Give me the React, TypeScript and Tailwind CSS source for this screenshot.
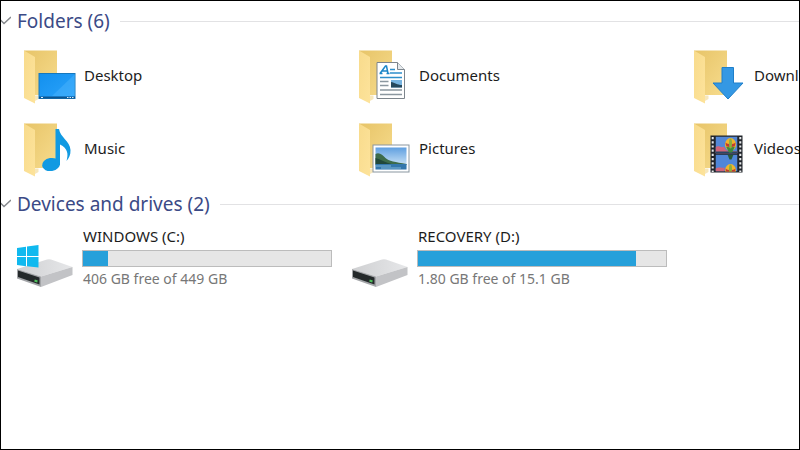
import { useState } from "react";
import type { ReactNode } from "react";

const folders = [
  { name: "Desktop", overlay: <DesktopOverlay /> },
  { name: "Documents", overlay: <DocumentOverlay /> },
  { name: "Downloads", overlay: <DownloadOverlay /> },
  { name: "Music", overlay: <MusicOverlay /> },
  { name: "Pictures", overlay: <PictureOverlay /> },
  { name: "Videos", overlay: <VideoOverlay /> },
];

const drives = [
  { name: "WINDOWS (C:)", info: "406 GB free of 449 GB", used: 10, system: true },
  { name: "RECOVERY (D:)", info: "1.80 GB free of 15.1 GB", used: 88, system: false },
];

function DesktopOverlay() {
  return (
    <g>
      <rect x="23" y="25.5" width="36" height="25" fill="url(#screen)" stroke="#1678bd" />
      <path d="M59 26v22H36z" fill="#5bbcff" opacity=".35" />
      <path d="M23 49.5h36" stroke="#0d5590" strokeWidth="2" />
      <path d="M25 49.5h2M51 49.5h1.5M53.5 49.5H55M56 49.5h1.5" stroke="#d8efff" />
    </g>
  );
}

function DocumentOverlay() {
  return (
    <g>
      <path d="M26 14.5h20.5l7 7V50.5H26z" fill="#fff" stroke="#7d858c" />
      <path d="M46.5 14.5v7h7" fill="#e6eaed" stroke="#7d858c" />
      <path d="M29 25.5L34.5 18h1l1.5 7.5M31.5 23h5M28.5 25.5h3M35.5 25.5h3" fill="none" stroke="#1c86c8" strokeWidth="1.5" />
      <path d="M39 21.5h5M39 25h12M29 29.5h22" stroke="#2f8fcb" strokeWidth="1.5" />
      <path d="M29 33.5h8.5M29 37.5h8.5M29 42h22M29 46.5h22" stroke="#8b979f" strokeWidth="1.3" />
      <rect x="40" y="32" width="11" height="7.5" fill="#78b4e0" />
      <path d="M40 34c4 .5 6 3 11 3v2.5H40z" fill="#26485c" />
    </g>
  );
}

function DownloadOverlay() {
  return <path d="M36 19.5h11.5V35H57L42 51 27 35h9z" fill="#3498e4" stroke="#1f7fca" />;
}

function MusicOverlay() {
  return (
    <g fill="#119ae2">
      <ellipse cx="35" cy="43.5" rx="9" ry="6.5" transform="rotate(-10 35 43.5)" />
      <path d="M39.5 8h3.5c1 8 11 12 11.5 21 .2 5-1.500 8-4 11 2-7 1.500-12.500-6.500-16.500V44h-4.500z" />
    </g>
  );
}

function PictureOverlay() {
  return (
    <g>
      <rect x="22" y="24" width="36" height="27" fill="#fff" stroke="#8996a0" />
      <rect x="24.5" y="26.5" width="31" height="22" fill="url(#sky)" />
      <path d="M24.5 33c4-2 7 1 10 4s10 4 21 6v1h-31z" fill="#3d6b4a" />
      <path d="M24.5 37c5 1 10 5 16 6h-16z" fill="#21483a" />
      <path d="M24.5 43h31v5.5h-31z" fill="#3477ac" />
      <path d="M25 45h15M30 47h20" stroke="#7eb6d6" />
    </g>
  );
}

function VideoOverlay() {
  return (
    <g>
      <rect x="24.5" y="14.5" width="32" height="37" fill="#20242a" />
      <path d="M26.700 16v35M54.300 16v35" stroke="#e7e9eb" strokeWidth="2" strokeDasharray="2.2 2" />
      {/* upper frame shows the whole balloon, lower one only its top */}
      <svg x="29.5" y="15.5" width="22" height="17" viewBox="0 0 22 17">
        <rect width="22" height="17" fill="#5488d6" />
        <path d="M0 11c3-3 6 1 8-1l3 4 11 1v2H0z" fill="#cf6579" />
        <path d="M0 15h22v2H0z" fill="#274765" />
        <Balloon />
      </svg>
      <svg x="29.5" y="33.5" width="22" height="17" viewBox="0 0 22 17">
        <rect width="22" height="17" fill="#4f86d8" />
        <path d="M12 0h6l-2 5h-2z" fill="#2c5a35" />
        <path d="M0 14c3-2 6 0 9-1v4H0z" fill="#cf6579" />
        <g transform="translate(0 8)">
          <Balloon />
        </g>
      </svg>
    </g>
  );
}

function Balloon() {
  return (
    <g>
      <ellipse cx="15" cy="8" rx="5.5" ry="6.500" fill="#f0b52b" />
      <path d="M10 6c2 2 8 2 10 0l-.5 3c-2 2-7 2-9 0z" fill="#c23a31" />
      <path d="M10.500 10c2 1 7 1 9 0L16.500 16h-3z" fill="#3f8a3d" />
      <ellipse cx="15" cy="7" rx="1.500" ry="5" fill="#8dae3d" />
    </g>
  );
}

function FolderIcon({ children }: { children: ReactNode }) {
  return (
    <svg className="h-14 w-[62px] shrink-0" viewBox="0 0 62 56" aria-hidden="true">
      <path d="M8 2.500h33V47H19z" fill="url(#folderBack)" />
      <path d="M8 2.500L19 9v46.500L8 50z" fill="url(#folderFront)" />
      <path d="M19 47.500h3.500V51L19 53z" fill="#f7e7bb" />
      {children}
    </svg>
  );
}

function DriveIcon({ system }: { system: boolean }) {
  return (
    <svg className="h-14 w-[62px] shrink-0" viewBox="0 0 62 56" aria-hidden="true">
      <path d="M1 38L31 28.500q2-.700 4 0L56.500 36 25 45.500z" fill="url(#driveTop)" />
      <path d="M25 45.500L56.500 36v8L25 56z" fill="#c2c3c6" />
      <path d="M1 38l24 7.500V56L1 47.500z" fill="#a3a5a8" />
      <path d="M2 39.500l21.500 7v7L2 46z" fill="#24292a" />
      <path d="M18.500 49.500l3 1" stroke="#4fc35d" strokeWidth="2" />
      {system && (
        <path
          d="M1 17l9-1.300v9.300H1zM11 15.500L22.500 14v11H11zM1 26h9v9.300L1 34zM11 26h11.500v10.500L11 35.300z"
          fill="#10b9ef"
        />
      )}
    </svg>
  );
}

// Gradients shared by all the icons on the page
function IconDefs() {
  return (
    <svg className="absolute h-0 w-0" aria-hidden="true">
      <defs>
        <linearGradient id="folderBack" x1="0" y1="0" x2="1" y2="1">
          <stop offset="0" stopColor="#e7c468" />
          <stop offset="1" stopColor="#f7dc8d" />
        </linearGradient>
        <linearGradient id="folderFront" x1="0" y1="0" x2="1" y2="1">
          <stop offset="0" stopColor="#f8db8c" />
          <stop offset="1" stopColor="#fde39b" />
        </linearGradient>
        <linearGradient id="screen" x1="0" y1="0" x2="1" y2="1">
          <stop offset="0" stopColor="#1390ee" />
          <stop offset="1" stopColor="#2ba3fb" />
        </linearGradient>
        <linearGradient id="sky" x1="0" y1="0" x2="0" y2="1">
          <stop offset="0" stopColor="#5f9fe0" />
          <stop offset="1" stopColor="#e3f2fb" />
        </linearGradient>
        <linearGradient id="driveTop" x1="0" y1="0" x2="1" y2="0">
          <stop offset="0" stopColor="#cfd0d2" />
          <stop offset="1" stopColor="#e6e7e9" />
        </linearGradient>
      </defs>
    </svg>
  );
}

function Section({ title, children }: { title: string; children: ReactNode }) {
  const [open, setOpen] = useState(true);

  return (
    <section className="pb-px">
      <h2 className="flex h-9 items-center gap-2.5">
        <button
          type="button"
          aria-expanded={open}
          onClick={() => setOpen(!open)}
          className="flex items-center gap-1.5 text-[19px] text-[#3b4a86]"
        >
          <svg className="h-2.5 w-2.5" viewBox="0 0 10 10" fill="none" stroke="#85888c" strokeWidth="1.5" aria-hidden="true">
            <path d={open ? "M-1 3.500L3 7.500 10 1" : "M3 0l5 5-5 5"} />
          </svg>
          {title}
        </button>
        <span className="h-px flex-1 bg-[#e2e2e4]" />
      </h2>
      {open && children}
    </section>
  );
}

export default function App() {
  return (
    <main className="min-h-screen overflow-hidden border border-black bg-white pt-0.5 font-['Noto_Sans',sans-serif]">
      <IconDefs />
      <Section title="Folders (6)">
        <ul className="grid grid-cols-[repeat(3,335px)] pl-[15px]">
          {folders.map((folder) => (
            <li key={folder.name}>
              <a href="#" className="flex h-[73px] items-center gap-1.5 text-[15px] text-[#1c1c1c]">
                <FolderIcon>{folder.overlay}</FolderIcon>
                {folder.name}
              </a>
            </li>
          ))}
        </ul>
      </Section>

      <Section title="Devices and drives (2)">
        <ul className="grid grid-cols-[repeat(3,335px)] pl-[15px]">
          {drives.map((drive) => (
            <li key={drive.name}>
              <a href="#" className="flex h-[73px] items-center gap-1">
                <DriveIcon system={drive.system} />
                <div className="w-[250px] pb-0.5">
                  <p className="pl-px text-[15px] leading-5 text-[#1c1c1c]">{drive.name}</p>
                  <div
                    role="progressbar"
                    aria-label={drive.name}
                    aria-valuenow={drive.used}
                    className="mt-1 mb-0.5 h-[17px] border border-[#bcbcbc] bg-[#e6e6e6]"
                  >
                    <div className="h-full bg-[#26a0da]" style={{ width: `${drive.used}%` }} />
                  </div>
                  <p className="pl-px text-sm leading-5 text-[#777777]">{drive.info}</p>
                </div>
              </a>
            </li>
          ))}
        </ul>
      </Section>
    </main>
  );
}
